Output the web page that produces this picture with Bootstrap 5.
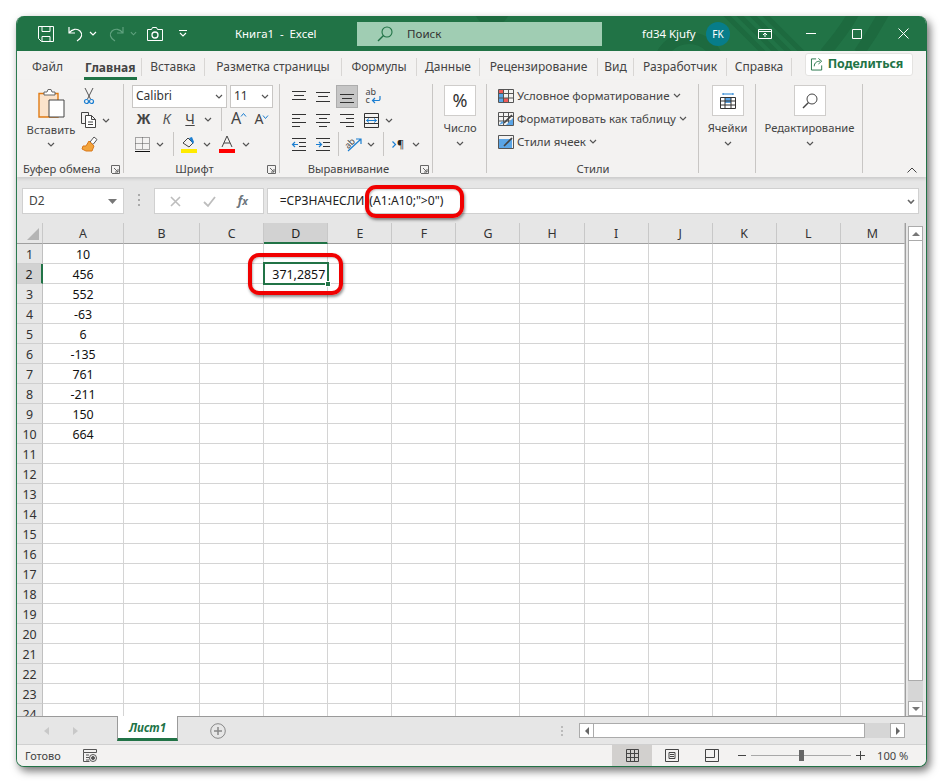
<!doctype html>
<html lang="ru">
<head>
<meta charset="utf-8">
<title>Книга1 - Excel</title>
<link rel="stylesheet" href="https://cdn.jsdelivr.net/npm/bootstrap@5.3.0/dist/css/bootstrap.min.css">
<style>
html,body{margin:0;background:#fff;height:100%;overflow:hidden}
body{font-family:"Noto Sans","Open Sans",sans-serif;font-size:12px;color:#444;line-height:1.2}
svg{display:block;flex:none;overflow:visible}
.xl-win{position:relative;margin:16px 0 0 16px;width:911px;height:751px;border-radius:8px;overflow:hidden;box-shadow:3px 4px 8px rgba(0,0,0,.55);background:#e6e6e6;border:solid #217346;border-width:0 1px 1px 1px;border-left-color:#2c7a50;border-right-color:#217346}
.xl-title{position:relative;height:35px;background:#217346;color:#fff;flex:none}
.xl-deco{position:absolute;left:0;top:0}
.xl-title>div{position:relative;flex:none}
.qat{display:flex;align-items:center;padding-left:21px;width:218px}
.qat svg:nth-child(2){margin-left:14px}
.qat svg:nth-child(3){margin-left:5px}
.qat svg:nth-child(4){margin-left:11px}
.qat svg:nth-child(5){margin-left:6px}
.qat svg:nth-child(6){margin-left:10px}
.qat svg:nth-child(7){margin-left:16px}
.doc-name{width:122px;font-size:11.4px;white-space:nowrap}
.xl-search{width:245px;height:24px;margin-top:1px;background:#a0cdb3;color:#333;font-size:11.6px;gap:14px;padding-left:20px}
.user-name{margin-left:40px;width:56px;font-size:11.4px;white-space:nowrap}
.avatar{width:24px;height:24px;background:#077d8a;font-size:10px;color:#fff;margin-left:8px}
.win-ctl{display:grid;grid-template-columns:46px 46px 46px 46px;margin-left:12px;justify-items:center;align-items:center}
.xl-tabs{height:29px;background:#f3f2f1;padding-top:3px;position:relative;flex:none}
.xl-tabs .nav-item{display:flex;align-items:center;height:26px;position:relative;flex:none}
.xl-tabs a{color:#444;text-decoration:none;padding:0;font-size:12px;white-space:nowrap;text-align:center;display:block}
.tab-sep{width:1px;height:18px;background:#d8d6d4;flex:none}
.tb1{width:67px;padding-left:15px!important;text-align:left!important}
.tb2{width:57px;position:relative;font-weight:700;color:#444!important;padding-left:1px!important;text-align:left!important}
.tb2::after{content:"";position:absolute;left:0;right:4px;top:17px;height:3px;background:#217346}
.xl-tabs .tb2{height:15px;line-height:15px}
.tb3{width:62px}.tb4{width:136px}.tb5{width:74px}.tb6{width:62px}.tb7{width:117px}.tb8{width:35px}.tb9{width:92px}.tb10{width:64px}
.share-btn{margin-left:13px;width:108px;height:23px;background:#fff;border:1px solid #e4e3e1;border-radius:3px;color:#217346;font-size:12.4px;font-weight:700;padding:0 4px 0 0;gap:4px;margin-top:-6px}
.xl-ribbon{height:97px;background:#f3f2f1;box-shadow:0 2px 3px rgba(0,0,0,.12);position:relative;flex:none}
.rgrp{height:97px;position:relative;flex:none}
.rgrp::after{content:"";position:absolute;right:0;top:4px;bottom:4px;width:1px;background:#c8c6c4}
.rg-clip{width:107px}.rg-font{width:156px}.rg-align{width:153px}.rg-num{width:54px}.rg-styl{width:212px}.rg-cells{width:57px}.rg-edit{width:107px}
.rg-label{position:absolute;left:0;right:0;bottom:0;height:16px;text-align:center;line-height:16px;font-size:11.2px;color:#444;white-space:nowrap}
.rg-font .rg-label{padding-right:15px}
.rg-align .rg-label{padding-right:16px}
.buf-l{margin-left:2px}
.launch{position:absolute;right:4px;bottom:3px}
.clip-grid{display:grid;grid-template-columns:61px 22px 12px;grid-template-rows:29px 22px 24px}
.paste{display:flex;flex-direction:column;align-items:center;padding:9px 0 0 7px;width:61px;grid-row:1 / span 3;white-space:nowrap}
.paste span{margin-top:4px;font-size:11.2px}
.paste svg:last-child{margin-top:6px}
.clip-a{display:flex;align-items:center;justify-content:center}
.clip-top{padding-top:8px;align-items:flex-start;grid-column:2 / span 2;justify-content:flex-start;padding-left:6px}
.font-boxes{display:flex;padding:5px 0 0 8px;gap:3px}
.sel-box{height:23px;background:#fff;border:1px solid #c8c6c4;padding:0 3px 0 3px;font-size:12px;color:#333;display:flex;align-items:center;justify-content:space-between}
.sel-font{width:95px}.sel-size{width:43px}
.rrow{display:grid;justify-items:center;align-items:center;height:24px}
.fr2{grid-template-columns:23px 24px 22px 14px 12px 23px 23px;padding-left:8px;margin-top:-1px}
.fr3{grid-template-columns:20px 16px 10px 22px 14px 26px 12px;padding-left:8px;margin-top:1px}
.v-sep{width:1px;height:24px;background:#c8c6c4}
.bld{font-weight:700;font-size:15px;color:#444;font-family:"Liberation Sans",sans-serif}
.ita{font-style:italic;font-size:14px;color:#555;font-family:"Liberation Sans",sans-serif}
.und{text-decoration:underline;font-size:14px;color:#444;font-family:"Liberation Sans",sans-serif}
.grow{display:flex;align-items:flex-start;font-size:16px;color:#444;font-family:"Noto Sans",sans-serif}
.grow.sm{font-size:14px;align-items:flex-end}
.ar1{grid-template-columns:24px 24px 24px 28px;padding-left:7px;margin-top:5px;height:23px}
.ar2{grid-template-columns:24px 24px 24px 24px 12px;padding-left:7px;height:24px}
.ar3{grid-template-columns:24px 24px 6px 26px 8px 16px 14px 22px;padding-left:7px;height:24px}
.wrap-ic{display:grid;width:15px;height:17px;grid-template-columns:15px;grid-template-rows:8px 9px;font-size:9px;line-height:8px;color:#444;position:relative;margin-top:-1px}
.wrap-ic svg{position:absolute;left:0;top:0}
.para-ic{display:flex;align-items:center;gap:1px;font-size:11px;color:#222}
.on-cell{width:22px;height:23px;background:#c6c6c6;border:1px solid #adadad;display:flex;align-items:center;justify-content:center}
.big-col{display:flex;flex-direction:column;align-items:center;padding-top:5px}
.big-box{width:32px;height:31px;background:#fff;border:1px solid #cfcdcb;display:flex;align-items:center;justify-content:center;font-size:18px;color:#333}
.big-col span{margin-top:5px;font-size:11.2px;white-space:nowrap}
.big-col svg.cv{margin-top:7px}
.styl-list{padding:4px 0 0 11px}
.styl-row{display:flex;align-items:center;height:23px;gap:3px;white-space:nowrap;font-size:11.5px}
.collapse-x{position:absolute;right:9px;bottom:4px}
.xl-fbar{height:46px;background:#e6e6e6;padding:11px 7px 0 5px;align-items:flex-start;flex:none}
.fbox{height:26px;background:#fff;border:1px solid #d0d0d0;display:flex;align-items:center}
.fb-name{width:102px;padding:0 6px;justify-content:space-between;font-size:12px;color:#444}
.fb-dots{width:30px;justify-content:center;display:flex;padding-top:6px}
.fb-fx{width:110px;justify-content:space-around;padding:0 4px}
.fb-input{margin-left:3px;width:653px;padding:0 3px 0 12px;justify-content:space-between;color:#222;white-space:nowrap;font-family:"Noto Sans",sans-serif}
.fx-a{font-size:12px}
.fx-b{font-size:12.2px;margin-left:5px}
.sheet-wrap{position:relative;height:493px;display:flex;background:#fff;flex:none}
.sheet-clip{width:888px;height:493px;overflow:hidden;background:#fff;flex:none}
.xl-sheet{table-layout:fixed;width:888px;border-collapse:separate;border-spacing:0;font-size:12.4px;color:#111}
.xl-sheet th,.xl-sheet td{padding:2px 0 0;vertical-align:top;height:20px;border-right:1px solid #d4d4d4;border-bottom:1px solid #d4d4d4;text-align:center;font-weight:400;overflow:visible;white-space:nowrap;line-height:17px}
.xl-sheet thead th{background:#e6e6e6;color:#333;border-right:1px solid #c8c8c8;border-bottom:1px solid #9f9f9f;font-size:12.4px}
.xl-sheet tbody th{background:#e6e6e6;color:#333;border-right:1px solid #c0c0c0;border-bottom:1px solid #cfcfcf}
.xl-sheet thead th.col-on{background:#d2d2d2;border-bottom:2px solid #217346;color:#222}
.xl-sheet tbody th.row-on{background:#d2d2d2;border-right:2px solid #217346;color:#222}
.xl-sheet td.cell-res{text-align:right;padding-right:2px}
.cw-h{width:26px}.cw-a{width:81px}.cw-b{width:76px}.cw-c{width:64px}.cw-o{width:64px}
.corner{position:relative}
.corner::after{content:"";position:absolute;right:3px;bottom:3px;border-style:solid;border-width:0 0 12px 12px;border-color:transparent transparent #b4b4b4 transparent}
.v-scroll{width:21px;background:#e6e6e6;padding:3px 3px 0 2px;border-left:1px solid #9f9f9f;display:flex;flex-direction:column;height:493px;flex:none}
.sb-arrow{width:15px;height:15px;background:#fff;border:1px solid #ababab;display:flex;align-items:center;justify-content:center;flex:none}
.sb-thumb{width:15px;height:441px;background:#fff;border:1px solid #ababab;flex:none;margin-top:-1px}
.sb-track{flex:1 1 auto;width:15px;background:#d6d6d6}
.xl-sel{position:absolute;left:246px;top:39px;width:66px;height:23px;border:2px solid #217346;pointer-events:none}
.xl-sel::after{content:"";position:absolute;right:-4px;bottom:-4px;width:6px;height:6px;background:#217346;border:1px solid #fff}
.red-ring{position:absolute;border:4px solid #f00000;border-radius:11px;box-shadow:1px 2px 3px rgba(0,0,0,.45),inset 1px 1px 2px rgba(0,0,0,.25);pointer-events:none;z-index:5}
.ring-f{left:348px;top:169px;width:99px;height:33px}
.ring-c{left:231px;top:237px;width:95px;height:42px}
.xl-sheetbar{height:28px;background:#e6e6e6;border-top:1px solid #9a9a9a;position:relative;flex:none}
.st-nav{width:100px;display:flex;gap:24px;padding-left:27px;align-items:center;height:27px}
.sh-tab{width:61px;height:25px;background:#fff;border:solid #9a9a9a;border-width:0 1px 0 1px;border-bottom:3px solid #217346;margin-top:-1px;color:#217346;font-weight:700;font-style:italic;font-size:11.6px;text-align:center;line-height:23px;font-family:"Noto Sans",sans-serif}
.add-s{margin-left:32px}
.sh-dots{margin-left:335px;width:10px}
.h-scroll{margin-left:8px;margin-top:6px;display:flex;height:15px}
.h-thumb{width:272px;height:15px;background:#fff;border:1px solid #ababab;margin-left:-1px}
.h-track{width:25px;height:15px;background:#d6d6d6}
.xl-status{height:22px;background:#f3f2f1;border-top:1px solid #d0d0d0;font-size:11px;color:#444;position:relative;flex:none}
.st-ready{padding-left:8px;width:66px}
.view-btn{width:40px;height:21px;display:flex;align-items:center;justify-content:center}
.view-on{background:#d2d0ce}
.views{margin-left:515px;display:flex}
.zoom-s{display:flex;align-items:center;margin-left:6px}
.zl{width:100px;height:1px;background:#a8a8a8;position:relative;margin:0 5px}
.zl::after{content:"";position:absolute;left:48px;top:-5px;width:5px;height:11px;background:#666}
.zpc{margin-left:12px;font-size:11.2px;white-space:nowrap}
</style>
</head>
<body>
<svg width="0" height="0" class="position-absolute">
<defs>
<symbol id="cv" viewBox="0 0 8 5"><path d="M1 1l3 3 3-3" fill="none" stroke="#555" stroke-width="1.2"/></symbol>
<symbol id="launch" viewBox="0 0 9 9"><path d="M.5 8V.5H8.5V8.5H1M3 3l4 4M7 4v3H4" fill="none" stroke="#666"/></symbol>
<symbol id="lines-l" viewBox="0 0 14 14"><path d="M0 1.500h14M0 5.500h8M0 9.500h14M0 13.500h8" stroke="#333" fill="none"/></symbol>
<symbol id="lines-c" viewBox="0 0 14 14"><path d="M0 1.500h14M3 5.500h8M0 9.500h14M3 13.500h8" stroke="#333" fill="none"/></symbol>
<symbol id="lines-r" viewBox="0 0 14 14"><path d="M0 1.500h14M6 5.500h8M0 9.500h14M6 13.500h8" stroke="#333" fill="none"/></symbol>
</defs>
</svg>

<div class="xl-win d-flex flex-column">
  <!-- title bar -->
  <div class="xl-title d-flex align-items-center">
    <svg class="xl-deco" width="911" height="35" viewBox="0 0 911 35" fill="none" stroke="#1d6a3f">
      <circle cx="672" cy="52" r="30" stroke-width="12"/>
      <circle cx="475" cy="-8" r="18" fill="#1d6a3f" stroke="none"/>
      <path d="M705-5l45 45M718-5l45 45M731-5l45 45M744-5l45 45" stroke-width="5"/>
      <path d="M838-5c-8 15-18 28-30 42M868-5c-8 15-16 28-26 42" stroke-width="11"/>
    </svg>
    <div class="qat">
      <svg width="16" height="16" viewBox="0 0 16 16" fill="none" stroke="#fff"><path d="M.5.500h15v15h-12l-3-3zM4 .5v5h8v-5M4 15.500v-5h8v5"/></svg>
      <svg width="16" height="15" viewBox="0 0 16 15" fill="none" stroke="#fff" stroke-width="1.2"><path d="M1 1v6h6M1 7c3-4 8-5 11-2s2 7-3 10"/></svg>
      <svg width="8" height="5" viewBox="0 0 8 5"><path d="M1 1l3 3 3-3" fill="none" stroke="#fff" stroke-width="1.2"/></svg>
      <svg width="16" height="15" viewBox="0 0 16 15" fill="none" stroke="#5fa17e" stroke-width="1.2"><path d="M15 1v6H9M15 7c-3-4-8-5-11-2s-2 7 3 10"/></svg>
      <svg width="7" height="5" viewBox="0 0 8 5"><path d="M1 1l3 3 3-3" fill="none" stroke="#5fa17e" stroke-width="1.2"/></svg>
      <svg width="16" height="14" viewBox="0 0 16 14" fill="none" stroke="#fff"><path d="M.5 2.500h4l1-2h4l1 2h5v11H.5z"/><circle cx="8" cy="8" r="3" stroke-width="1.3"/></svg>
      <svg width="8" height="7" viewBox="0 0 8 7" fill="none" stroke="#fff"><path d="M0 .5h8M1 3l3 3 3-3" stroke-width="1.1"/></svg>
    </div>
    <div class="doc-name">Книга1&nbsp; -&nbsp; Excel</div>
    <div class="xl-search d-flex align-items-center">
      <svg width="16" height="16" viewBox="0 0 16 16" fill="none" stroke="#217346" stroke-width="1.1"><circle cx="10" cy="6" r="5"/><path d="M6.500 9.500L1 15" stroke-width="1.4"/></svg>
      <span>Поиск</span>
    </div>
    <div class="user-name">fd34 Kjufy</div>
    <div class="avatar rounded-circle d-flex align-items-center justify-content-center">FK</div>
    <div class="win-ctl">
      <svg width="14" height="10" viewBox="0 0 14 10" fill="none" stroke="#fff"><path d="M.5.500h13v9H.5zM.5 2.500h13M7 8V4M5 6l2-2 2 2"/></svg>
      <svg width="10" height="1"><path d="M0 .5h10" stroke="#fff"/></svg>
      <svg width="10" height="10"><path d="M.5.500h9v9h-9z" stroke="#fff" fill="none"/></svg>
      <svg width="11" height="11"><path d="M.5.500l10 10M10.500.5l-10 10" stroke="#fff" fill="none"/></svg>
    </div>
  </div>

  <!-- ribbon tabs -->
  <ul class="nav xl-tabs flex-nowrap align-items-center">
    <li class="nav-item"><a class="nav-link tb1" href="#">Файл</a></li>
    <li class="nav-item"><a class="nav-link tb2" href="#">Главная</a></li>
    <li class="tab-sep"></li>
    <li class="nav-item"><a class="nav-link tb3" href="#">Вставка</a></li>
    <li class="tab-sep"></li>
    <li class="nav-item"><a class="nav-link tb4" href="#">Разметка страницы</a></li>
    <li class="tab-sep"></li>
    <li class="nav-item"><a class="nav-link tb5" href="#">Формулы</a></li>
    <li class="tab-sep"></li>
    <li class="nav-item"><a class="nav-link tb6" href="#">Данные</a></li>
    <li class="tab-sep"></li>
    <li class="nav-item"><a class="nav-link tb7" href="#">Рецензирование</a></li>
    <li class="tab-sep"></li>
    <li class="nav-item"><a class="nav-link tb8" href="#">Вид</a></li>
    <li class="tab-sep"></li>
    <li class="nav-item"><a class="nav-link tb9" href="#">Разработчик</a></li>
    <li class="tab-sep"></li>
    <li class="nav-item"><a class="nav-link tb10" href="#">Справка</a></li>
    <li class="tab-sep"></li>
    <li class="nav-item"><button type="button" class="btn share-btn d-flex align-items-center justify-content-center">
      <svg width="13" height="14" viewBox="0 0 14 14" fill="none" stroke="#217346"><path d="M5.500 1.500H.5v12h11v-5M3.500 9.500c0-4 3-5.500 6-5.500M8 1l3.500 3L8 7" /></svg>Поделиться</button></li>
  </ul>

  <!-- ribbon -->
  <div class="xl-ribbon d-flex">
    <div class="rgrp rg-clip">
      <div class="clip-grid">
        <div class="paste">
          <svg width="27" height="30" viewBox="0 0 27 30" fill="none"><path d="M1 4.500h19V28H1z" fill="#fbe3cb" stroke="#e07b14" stroke-width="1.4"/><path d="M6 6V3h3l1-2.500h3L14 3h3v3z" fill="#fff" stroke="#666"/><path d="M11 11h15v17H11z" fill="#fff" stroke="#444"/></svg>
          <span>Вставить</span>
          <svg class="cv" width="8" height="5"><use href="#cv"/></svg>
        </div>
        <div class="clip-a clip-top"><svg width="10" height="16" viewBox="0 0 10 16" fill="none"><path d="M1 0l5.500 11M9 0L3.500 11" stroke="#555"/><circle cx="2.500" cy="13.500" r="2" stroke="#1c7fd1" stroke-width="1.2"/><circle cx="7.500" cy="13.500" r="2" stroke="#1c7fd1" stroke-width="1.2"/></svg></div>
        <div class="clip-a"><svg width="16" height="16" viewBox="0 0 16 16" fill="none" stroke="#444"><path d="M4.500 11.500H.5V.5h7v3"/><path d="M4.500 3.500h6l4 4v8h-10zM10.500 3.500v4h4M7 10h5M7 12.500h5" fill="#fff"/></svg></div>
        <div class="clip-a"><svg width="8" height="5"><use href="#cv"/></svg></div>
        <div class="clip-a"><svg width="16" height="15" viewBox="0 0 16 15"><path d="M9 6l4-5 3 2.500-4 5z" fill="#fff" stroke="#555"/><path d="M8 5l5 5-2 5H5l-4-2 1-3 3 0z" fill="#f3a43b" stroke="#d9781b"/></svg></div>
      </div>
      <div class="rg-label text-start ps-1"><span class="buf-l">Буфер обмена</span></div>
      <svg class="launch" width="9" height="9"><use href="#launch"/></svg>
    </div>

    <div class="rgrp rg-font">
      <div class="font-boxes">
        <div class="sel-box sel-font"><span>Calibri</span><svg width="8" height="5"><use href="#cv"/></svg></div>
        <div class="sel-box sel-size"><span>11</span><svg width="8" height="5"><use href="#cv"/></svg></div>
      </div>
      <div class="rrow fr2">
        <span class="bld">Ж</span><span class="ita">К</span><span class="und">Ч</span>
        <svg width="8" height="5"><use href="#cv"/></svg><i class="v-sep"></i>
        <span class="grow">A<svg width="5" height="4" viewBox="0 0 5 4" class="mt-1"><path d="M0 3.500l2.500-3 2.500 3" fill="none" stroke="#1c7fd1"/></svg></span>
        <span class="grow sm">A<svg width="5" height="4" viewBox="0 0 5 4" class="mb-2"><path d="M0 .5l2.500 3 2.500-3" fill="none" stroke="#1c7fd1"/></svg></span>
      </div>
      <div class="rrow fr3">
        <svg width="15" height="15" viewBox="0 0 15 15" fill="none" stroke="#555" stroke-dasharray="1 1"><path d="M.5.500h14v12H.5zM7.500.5v12M.5 6.500h14"/><path d="M0 14.500h15" stroke="#111" stroke-dasharray="none" stroke-width="1.2"/></svg>
        <svg width="8" height="5"><use href="#cv"/></svg><i class="v-sep"></i>
        <svg width="16" height="17" viewBox="0 0 16 17"><path d="M2 7l5-5 5 5-4 4z" fill="none" stroke="#444"/><path d="M8 2l3-1 2 5-1 2" fill="#1c7fd1"/><path d="M0 13h16v4H0z" fill="#ffeb00"/></svg>
        <svg width="8" height="5"><use href="#cv"/></svg>
        <svg width="16" height="17" viewBox="0 0 16 17"><path d="M3 11L8 0l5 11M5 7h6" fill="none" stroke="#444"/><path d="M0 13h16v4H0z" fill="#f00"/></svg>
        <svg width="8" height="5"><use href="#cv"/></svg>
      </div>
      <div class="rg-label">Шрифт</div>
      <svg class="launch" width="9" height="9"><use href="#launch"/></svg>
    </div>

    <div class="rgrp rg-align">
      <div class="rrow ar1">
        <svg width="14" height="11" viewBox="0 0 14 11" fill="none" stroke="#333"><path d="M0 .5h14M2 4.500h10M0 8.500h14"/></svg>
        <svg width="14" height="12" viewBox="0 0 14 12" fill="none" stroke="#333"><path d="M0 1.500h14M2 5.500h10M0 10.500h14"/></svg>
        <span class="on-cell"><svg width="14" height="12" viewBox="0 0 14 12" fill="none" stroke="#333"><path d="M0 3.500h14M2 7.500h10M0 11.500h14"/></svg></span>
        <span class="wrap-ic"><svg width="15" height="17" viewBox="0 0 15 17" fill="none"><path d="M14 8v3a1.500 1.500 0 0 1-1.500 1.500H7M9 10l-2.500 2.500L9 15" stroke="#1c7fd1" stroke-width="1.2"/></svg><span>ab</span><span>c</span></span>
      </div>
      <div class="rrow ar2">
        <svg width="14" height="14"><use href="#lines-l"/></svg>
        <svg width="14" height="14"><use href="#lines-c"/></svg>
        <svg width="14" height="14"><use href="#lines-r"/></svg>
        <svg width="15" height="15" viewBox="0 0 15 15" fill="none"><path d="M.5.500h14v14H.5zM.5 4.500h14M.5 10.500h14" stroke="#333"/><path d="M2.500 7.500h10M5 5.500l-2.500 2 2.500 2M10 5.500l2.500 2-2.500 2" stroke="#1c7fd1"/></svg>
        <svg width="8" height="5"><use href="#cv"/></svg>
      </div>
      <div class="rrow ar3">
        <svg width="14" height="14" viewBox="0 0 14 14" fill="none"><path d="M0 1.500h14M7 5.500h7M7 9.500h7M0 13.500h14" stroke="#333"/><path d="M6 7.500H.5M3 5l-2.500 2.500L3 10" stroke="#1c7fd1" stroke-width="1.2"/></svg>
        <svg width="14" height="14" viewBox="0 0 14 14" fill="none"><path d="M0 1.500h14M7 5.500h7M7 9.500h7M0 13.500h14" stroke="#333"/><path d="M0 7.500h5.500M3 5l2.500 2.500L3 10" stroke="#1c7fd1" stroke-width="1.2"/></svg>
        <i class="v-sep"></i>
        <svg width="16" height="16" viewBox="0 0 16 16" fill="none"><text x="0" y="10" font-size="9" fill="#444" font-family="Noto Sans" transform="rotate(-45 5 9)">ab</text><path d="M2 15L15 3M10 3h5v5" stroke="#1c7fd1" stroke-width="1.2"/></svg>
        <svg width="8" height="5"><use href="#cv"/></svg>
        <i class="v-sep"></i>
        <span class="para-ic"><svg width="4" height="7" viewBox="0 0 4 7"><path d="M.5.500l3 3-3 3" fill="none" stroke="#1c7fd1" stroke-width="1.2"/></svg><span>¶</span></span>
        <svg width="8" height="5"><use href="#cv"/></svg>
      </div>
      <div class="rg-label">Выравнивание</div>
      <svg class="launch" width="9" height="9"><use href="#launch"/></svg>
    </div>

    <div class="rgrp rg-num">
      <div class="big-col">
        <div class="big-box">%</div>
        <span>Число</span>
        <svg class="cv" width="8" height="5"><use href="#cv"/></svg>
      </div>
    </div>

    <div class="rgrp rg-styl">
      <div class="styl-list">
        <div class="styl-row"><svg width="16" height="14" viewBox="0 0 16 14" fill="none"><path d="M1 1h5v4H1zM5 9h5v4H5z" fill="#f05a5a"/><path d="M1 5h5v8H1z" fill="#5aa5e6"/><path d="M.5.500h15v13H.5zM5.500.5v13M10.500.5v13M.5 4.500h15M.5 9h15" stroke="#555"/></svg><span>Условное форматирование</span><svg width="8" height="5"><use href="#cv"/></svg></div>
        <div class="styl-row"><svg width="16" height="14" viewBox="0 0 16 14" fill="none"><path d="M.5.500h15v13H.5zM5.500.5v13M10.500.5v13M.5 4.500h15M.5 9h15" stroke="#555"/><path d="M8 13l7-7v7zM1 13l3-4 2 2z" fill="#5aa5e6"/><path d="M6 11l8-8" stroke="#444" stroke-width="1.6"/></svg><span>Форматировать как таблицу</span><svg width="8" height="5"><use href="#cv"/></svg></div>
        <div class="styl-row"><svg width="16" height="14" viewBox="0 0 16 14" fill="none"><path d="M.5.500h15v13H.5z" stroke="#555"/><path d="M1 4h13v9H1z" fill="#5aa5e6"/><path d="M6 11l8-8" stroke="#444" stroke-width="1.6"/></svg><span>Стили ячеек</span><svg width="8" height="5"><use href="#cv"/></svg></div>
      </div>
      <div class="rg-label">Стили</div>
    </div>

    <div class="rgrp rg-cells">
      <div class="big-col">
        <div class="big-box"><svg width="16" height="16" viewBox="0 0 16 16" fill="none"><path d="M5 4h6v6H5z" fill="#5aa5e6"/><path d="M.5 4.500h15v11H.5zM5 4.500v11M11 4.500v11M.5 8h15M.5 12h15" stroke="#333"/><path d="M3 1h10M3 0v2M13 0v2" stroke="#1c7fd1"/></svg></div>
        <span>Ячейки</span>
        <svg class="cv" width="8" height="5"><use href="#cv"/></svg>
      </div>
    </div>

    <div class="rgrp rg-edit">
      <div class="big-col">
        <div class="big-box"><svg width="16" height="16" viewBox="0 0 16 16" fill="none" stroke="#444"><circle cx="10" cy="6" r="5"/><path d="M6.500 9.500L1 15" stroke-width="1.4"/></svg></div>
        <span>Редактирование</span>
        <svg class="cv" width="8" height="5"><use href="#cv"/></svg>
      </div>
    </div>
    <svg class="collapse-x" width="10" height="6" viewBox="0 0 10 6"><path d="M.5 5.500L5 1l4.500 4.500" fill="none" stroke="#444"/></svg>
  </div>

  <!-- formula bar -->
  <div class="xl-fbar d-flex">
    <div class="fbox fb-name"><span>D2</span><svg width="9" height="5" viewBox="0 0 9 5"><path d="M0 0h9L4.500 5z" fill="#777"/></svg></div>
    <div class="fb-dots"><svg width="2" height="12" viewBox="0 0 2 12" fill="#aaa"><path d="M0 0h2v2H0zM0 5h2v2H0zM0 10h2v2H0z"/></svg></div>
    <div class="fbox fb-fx">
      <svg width="11" height="11" viewBox="0 0 11 11"><path d="M1 1l9 9M10 1l-9 9" stroke="#bdbdbd" stroke-width="1.6" fill="none"/></svg>
      <svg width="13" height="11" viewBox="0 0 13 11"><path d="M1 6l4 4 7-9" stroke="#bdbdbd" stroke-width="1.8" fill="none"/></svg>
      <span class="fst-italic fw-bold text-secondary">f<small>x</small></span>
    </div>
    <div class="fbox fb-input"><span><span class="fx-a">=СРЗНАЧЕСЛИ</span><span class="fx-b">(A1:A10;"&gt;0")</span></span><svg width="8" height="5" viewBox="0 0 8 5"><path d="M1 1l3 3 3-3" fill="none" stroke="#666" stroke-width="1.6"/></svg></div>
  </div>

  <!-- sheet -->
  <div class="sheet-wrap">
    <div class="sheet-clip">
      <table class="xl-sheet">
        <colgroup><col class="cw-h"><col class="cw-a"><col class="cw-b"><col class="cw-c"><col class="cw-o"><col class="cw-o"><col class="cw-o"><col class="cw-o"><col class="cw-o"><col class="cw-o"><col class="cw-o"><col class="cw-o"><col class="cw-o"><col class="cw-o"></colgroup>
        <thead><tr><th class="corner"></th><th>A</th><th>B</th><th>C</th><th class="col-on">D</th><th>E</th><th>F</th><th>G</th><th>H</th><th>I</th><th>J</th><th>K</th><th>L</th><th>M</th></tr></thead>
        <tbody id="xlbody"></tbody>
      </table>
    </div>
    <div class="v-scroll">
      <div class="sb-arrow"><svg width="8" height="4" viewBox="0 0 8 4"><path d="M0 4l4-4 4 4z" fill="#777"/></svg></div>
      <div class="sb-thumb"></div>
      <div class="sb-track"></div>
      <div class="sb-arrow"><svg width="8" height="4" viewBox="0 0 8 4"><path d="M0 0l4 4 4-4z" fill="#777"/></svg></div>
    </div>
    <div class="xl-sel"></div>
  </div>

  <!-- sheet tabs -->
  <div class="xl-sheetbar d-flex">
    <div class="st-nav">
      <svg width="5" height="8" viewBox="0 0 5 8"><path d="M5 0L0 4l5 4z" fill="#c8c8c8"/></svg>
      <svg width="5" height="8" viewBox="0 0 5 8"><path d="M0 0l5 4-5 4z" fill="#c8c8c8"/></svg>
    </div>
    <div class="sh-tab">Лист1</div>
    <div class="add-s d-flex align-items-center"><svg width="16" height="16" viewBox="0 0 16 16" fill="none" stroke="#888"><circle cx="8" cy="8" r="7.300"/><path d="M4 8h8M8 4v8" stroke-width="1.500"/></svg></div>
    <div class="sh-dots d-flex align-items-center"><svg width="2" height="10" viewBox="0 0 2 10" fill="#bbb"><path d="M0 0h2v2H0zM0 4h2v2H0zM0 8h2v2H0z"/></svg></div>
    <div class="h-scroll">
      <div class="sb-arrow"><svg width="4" height="8" viewBox="0 0 4 8"><path d="M4 0L0 4l4 4z" fill="#666"/></svg></div>
      <div class="h-thumb"></div>
      <div class="h-track"></div>
      <div class="sb-arrow"><svg width="4" height="8" viewBox="0 0 4 8"><path d="M0 0l4 4-4 4z" fill="#666"/></svg></div>
    </div>
  </div>

  <!-- status bar -->
  <div class="xl-status d-flex align-items-center">
    <div class="st-ready">Готово</div>
    <svg width="14" height="13" viewBox="0 0 14 13" fill="none" stroke="#555"><path d="M.5.500h13v3H.5zM.5 3.500v9h6M3 6h3M3 8.500h3M3 11h3"/><circle cx="10" cy="9" r="3.500"/><circle cx="10" cy="9" r="1.500" fill="#555"/></svg>
    <div class="views">
      <div class="view-btn view-on"><svg width="13" height="13" viewBox="0 0 13 13" fill="none" stroke="#444"><path d="M.5.500h12v12H.5zM4.500.5v12M8.500.5v12M.5 4.500h12M.5 8.500h12"/></svg></div>
      <div class="view-btn"><svg width="14" height="13" viewBox="0 0 14 13" fill="none" stroke="#444"><path d="M.5.500h13v12H.5zM4 3.500h6v6H4zM5 5.500h4M5 7.500h4"/></svg></div>
      <div class="view-btn"><svg width="14" height="13" viewBox="0 0 14 13" fill="none" stroke="#444"><path d="M.5.500h13v12H.5zM.5 8.500h9v-8"/></svg></div>
    </div>
    <div class="zoom-s">
      <svg width="8" height="1"><path d="M0 .5h8" stroke="#444"/></svg>
      <div class="zl"></div>
      <svg width="9" height="9" viewBox="0 0 9 9"><path d="M0 4.500h9M4.500 0v9" stroke="#444"/></svg>
      <div class="zpc">100 %</div>
    </div>
  </div>

  <div class="red-ring ring-f"></div>
  <div class="red-ring ring-c"></div>
</div>

<script>
var vals=[10,456,552,-63,6,-135,761,-211,150,664];
var h='';
for(var r=1;r<=24;r++){
  h+='<tr><th class="'+(r==2?'row-on':'')+'">'+r+'</th><td>'+(vals[r-1]!==undefined?vals[r-1]:'')+'</td><td></td><td></td>';
  h+='<td class="cell-res">'+(r==2?'371,2857':'')+'</td>';
  for(var c=0;c<9;c++)h+='<td></td>';
  h+='</tr>';
}
document.getElementById('xlbody').innerHTML=h;
</script>
<script src="https://cdn.jsdelivr.net/npm/bootstrap@5.3.0/dist/js/bootstrap.bundle.min.js"></script>
</body>
</html>
